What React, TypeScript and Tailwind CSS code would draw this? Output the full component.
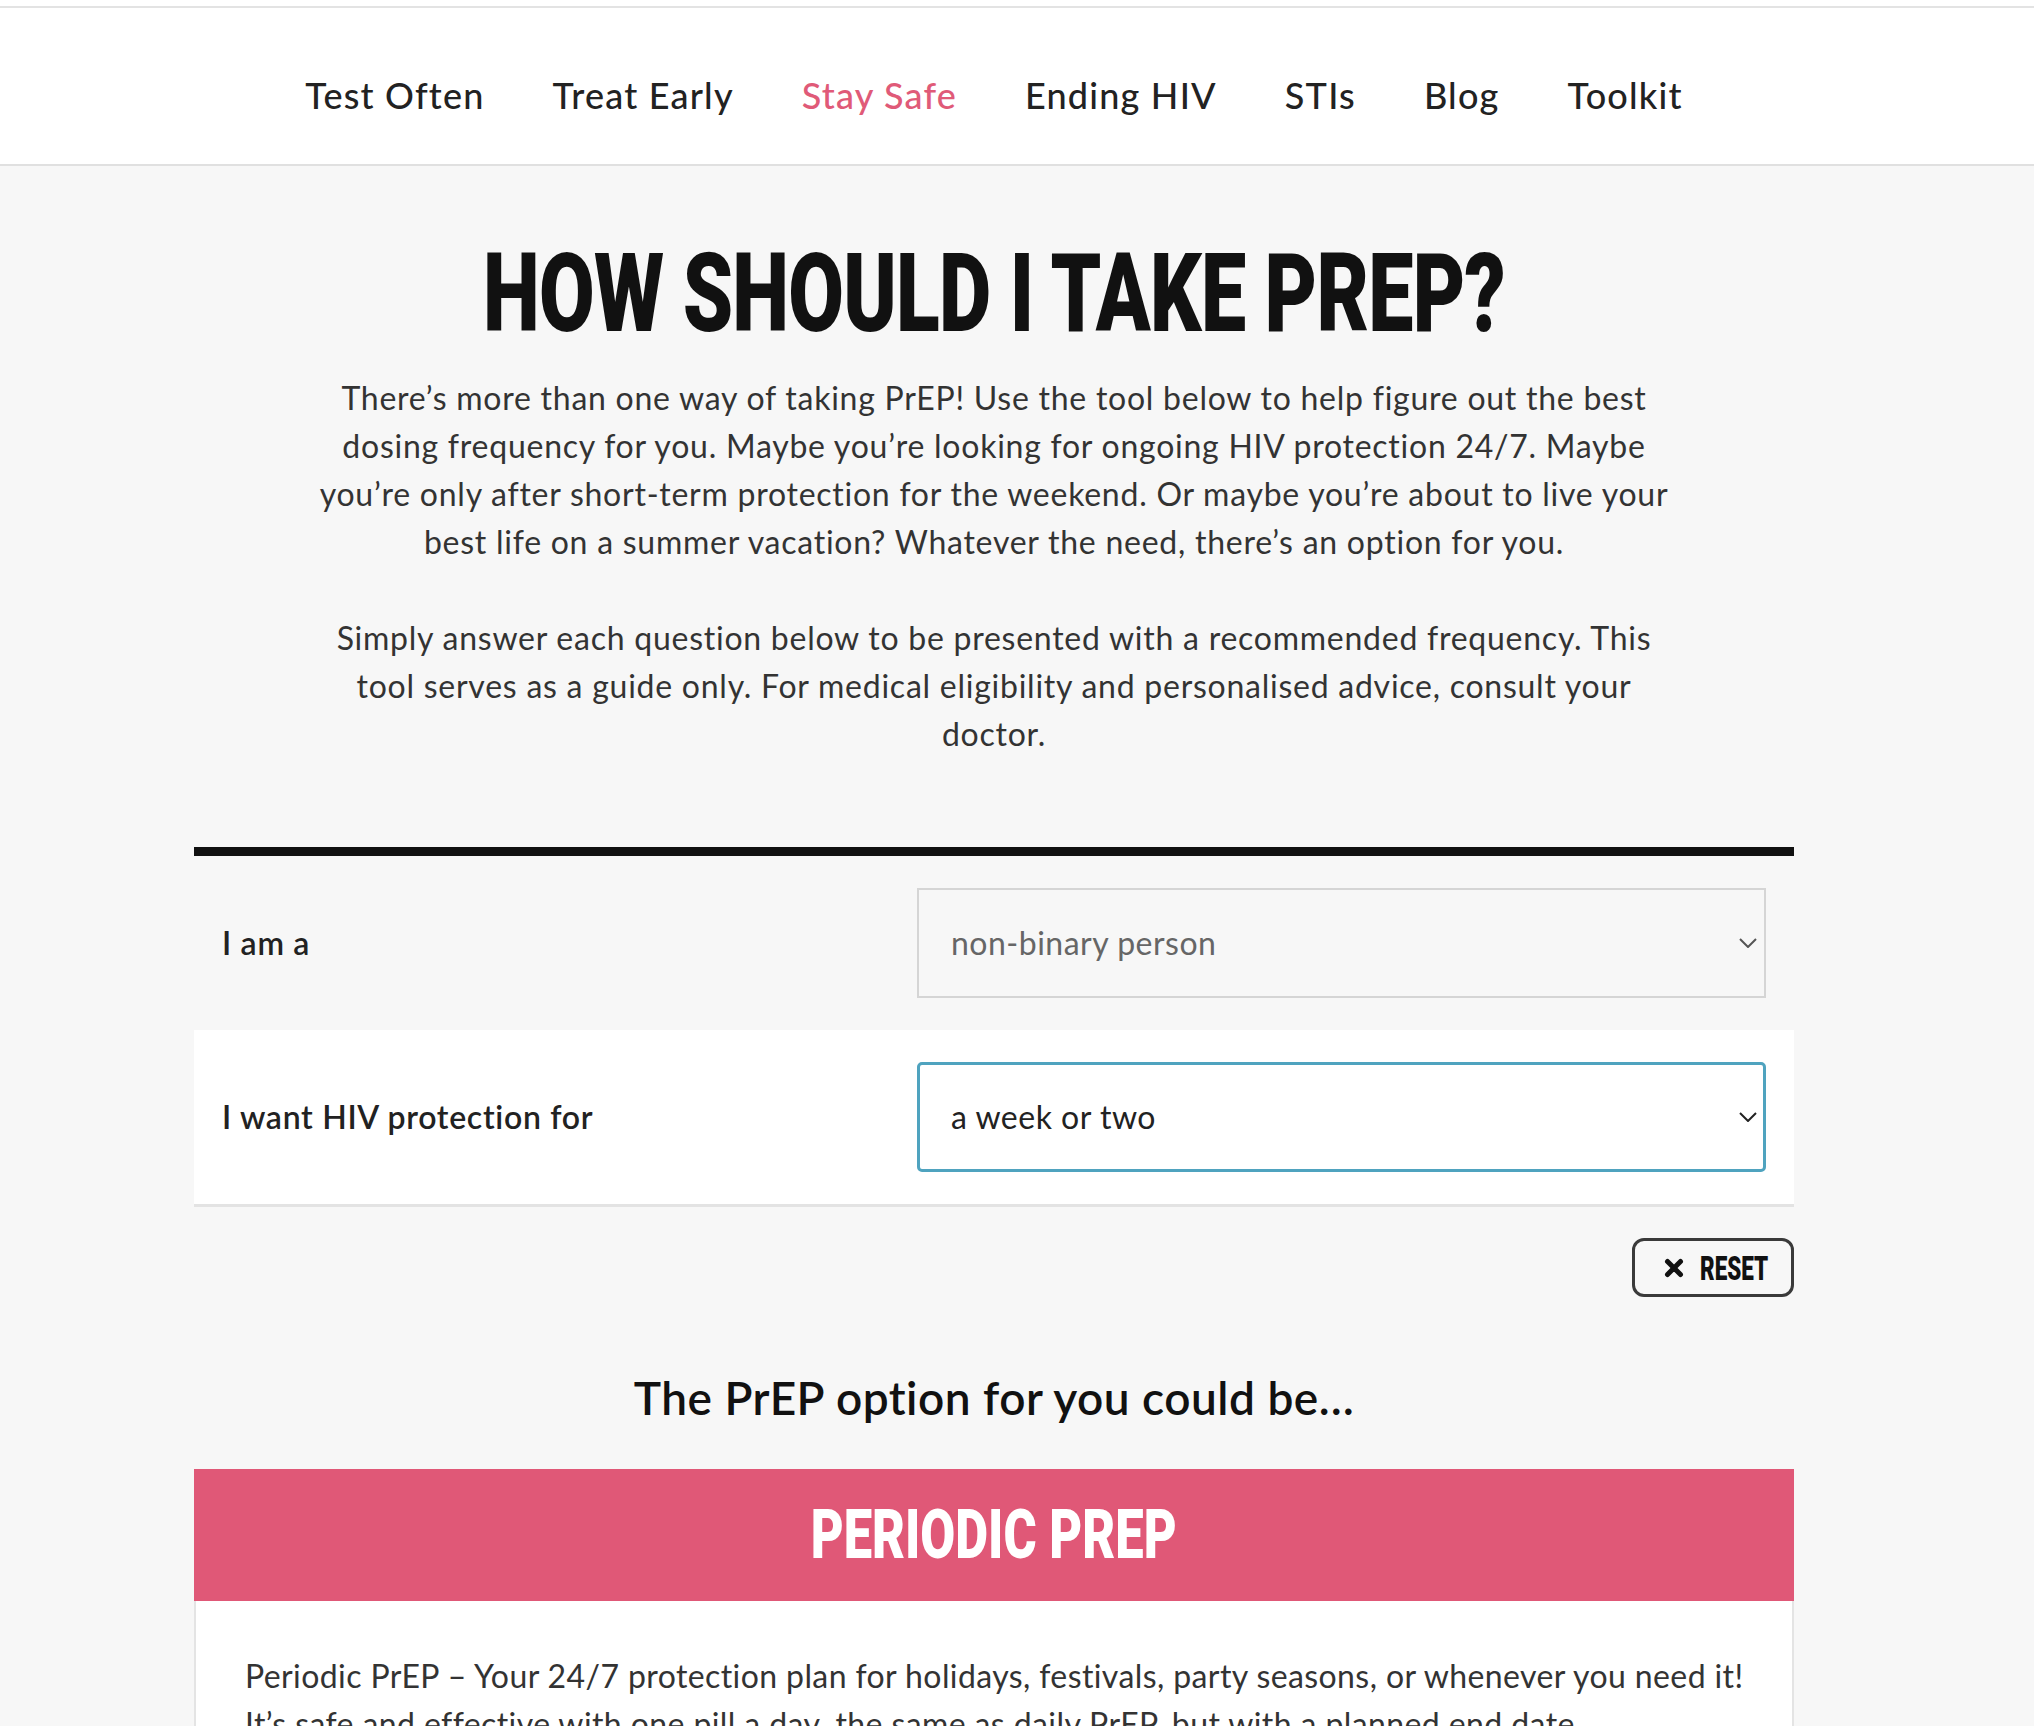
import React from "react";

const navItems = [
  { label: "Test Often", active: false },
  { label: "Treat Early", active: false },
  { label: "Stay Safe", active: true },
  { label: "Ending HIV", active: false },
  { label: "STIs", active: false },
  { label: "Blog", active: false },
  { label: "Toolkit", active: false },
];

const introLines = [
  "There’s more than one way of taking PrEP! Use the tool below to help figure out the best",
  "dosing frequency for you. Maybe you’re looking for ongoing HIV protection 24/7. Maybe",
  "you’re only after short-term protection for the weekend. Or maybe you’re about to live your",
  "best life on a summer vacation? Whatever the need, there’s an option for you.",
];

const guideLines = [
  "Simply answer each question below to be presented with a recommended frequency. This",
  "tool serves as a guide only. For medical eligibility and personalised advice, consult your",
  "doctor.",
];

function Chevron({ color }: { color: string }) {
  return (
    <svg
      width="18"
      height="10"
      viewBox="0 0 18 10"
      fill="none"
      className="pointer-events-none absolute right-[9px] top-1/2 -translate-y-1/2"
    >
      <polyline points="1,1 9,9 17,1" stroke={color} strokeWidth="2" />
    </svg>
  );
}

function Dropdown({
  value,
  options,
  focused,
}: {
  value: string;
  options: string[];
  focused?: boolean;
}) {
  return (
    <div className="relative w-[849px]">
      <select
        defaultValue={value}
        className={
          focused
            ? "h-[110px] w-full appearance-none rounded-[5px] border-[3px] border-[#4fa3bf] bg-white pl-[31px] text-[32px] tracking-[0.5px] text-[#222] outline-none [font-family:Lato,'Open_Sans',sans-serif]"
            : "h-[110px] w-full appearance-none border-2 border-[#d5d5d5] bg-[#f7f7f7] pl-[32px] text-[32px] tracking-[0.5px] text-[#666] outline-none [font-family:Lato,'Open_Sans',sans-serif]"
        }
      >
        {options.map((o) => (
          <option key={o} value={o}>
            {o}
          </option>
        ))}
      </select>
      <Chevron color={focused ? "#222" : "#555"} />
    </div>
  );
}

export default function App() {
  return (
    <div className="min-h-screen bg-[#f7f7f7] text-[#333] [font-family:Lato,'Open_Sans',sans-serif]">
      {/* site header */}
      <div className="h-[6px] bg-white" />
      <header className="border-t-2 border-b-2 border-t-[#e3e3e3] border-b-[#e0e0e0] bg-white">
        <nav className="flex h-[156px] items-center justify-center gap-[68px] pr-[46px] pt-[17px]">
          {navItems.map((item) => (
            <a
              key={item.label}
              href="#"
              className={
                item.active
                  ? "text-[36px] font-medium tracking-[1.2px] text-[#e05a78]"
                  : "text-[36px] font-medium tracking-[1.2px] text-[#222]"
              }
            >
              {item.label}
            </a>
          ))}
        </nav>
      </header>

      <main className="pr-[46px]">
        <div className="mx-auto w-[1600px]">
          {/* page title */}
          <div className="flex justify-center pt-[73px]">
            <h1 className="inline-block origin-center scale-x-[0.733] whitespace-nowrap text-[110px] font-black leading-none tracking-[-1px] text-[#111] [font-family:Roboto,'Liberation_Sans',sans-serif]">
              HOW SHOULD I TAKE PREP?
            </h1>
          </div>

          <div className="mt-[25px] text-center text-[32px] leading-[48px] tracking-[0.75px] text-[#333]">
            <p className="mb-[48px]">
              {introLines.map((l) => (
                <span key={l} className="block whitespace-nowrap">
                  {l}
                </span>
              ))}
            </p>
            <p>
              {guideLines.map((l) => (
                <span key={l} className="block whitespace-nowrap">
                  {l}
                </span>
              ))}
            </p>
          </div>

          {/* dosing questionnaire */}
          <form className="mt-[89px] border-t-[9px] border-[#111]">
            <div className="flex h-[174px] items-center px-[28px]">
              <label className="flex-1 text-[32px] font-semibold tracking-[0.7px] text-[#222]">I am a</label>
              <Dropdown
                value="non-binary person"
                options={["a man", "a woman", "non-binary person"]}
              />
            </div>
            <div className="flex h-[177px] items-center border-b-[3px] border-[#e3e3e3] bg-white px-[28px]">
              <label className="flex-1 text-[32px] font-semibold tracking-[0.7px] text-[#222]">
                I want HIV protection for
              </label>
              <Dropdown
                value="a week or two"
                options={["ongoing protection", "a week or two", "a weekend"]}
                focused
              />
            </div>
          </form>

          <div className="mt-[31px] flex justify-end">
            <button
              type="button"
              className="flex h-[59px] w-[162px] items-center rounded-[12px] border-[3.5px] border-[#3a3a3a] pl-[29px]"
            >
              <svg width="20" height="20" viewBox="0 0 20 20" className="shrink-0">
                <path d="M3.5 3.5 L16.5 16.5 M16.5 3.5 L3.5 16.5" stroke="#111" strokeWidth="5" strokeLinecap="round" />
              </svg>
              <span className="ml-[16px] inline-block origin-left scale-x-[0.66] whitespace-nowrap text-[34px] font-black leading-none text-[#111] [font-family:Roboto,'Liberation_Sans',sans-serif]">
                RESET
              </span>
            </button>
          </div>

          {/* recommendation */}
          <h2 className="mt-[74px] text-center text-[46px] font-semibold leading-[54px] tracking-[0.5px] text-[#111]">
            The PrEP option for you could be…
          </h2>

          <div className="mt-[44px] flex h-[132px] items-center justify-center bg-[#e05877]">
            <span className="inline-block origin-center scale-x-[0.745] whitespace-nowrap text-[68px] font-black leading-none text-white [font-family:Roboto,'Liberation_Sans',sans-serif]">
              PERIODIC PREP
            </span>
          </div>

          <div className="border-x-2 border-[#e4e4e4] bg-white px-[49px] pb-[60px] pt-[51px] text-[32px] leading-[48px] tracking-[0.4px] text-[#333]">
            <p className="whitespace-nowrap">
              Periodic PrEP – Your 24/7 protection plan for holidays, festivals, party seasons, or whenever you need it!
            </p>
            <p className="whitespace-nowrap">
              It’s safe and effective with one pill a day, the same as daily PrEP, but with a planned end date.
            </p>
          </div>
        </div>
      </main>
    </div>
  );
}
